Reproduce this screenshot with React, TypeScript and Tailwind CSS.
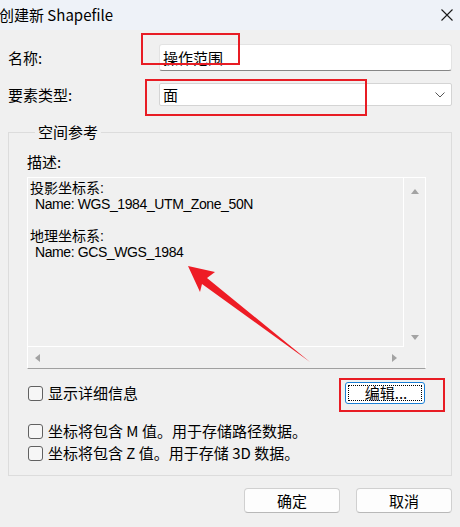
import React from 'react';

// Windows style "create shapefile" dialog, annotated with red marks
const Check = ({ label }: { label: React.ReactNode }) => (
  <label className="flex items-center h-[22px] gap-[5px]">
    <span className="w-[15px] h-[15px] rounded-[3px] border border-[#616161] bg-[#f6f6f6] shrink-0" />
    <span className="leading-[22px] whitespace-nowrap">{label}</span>
  </label>
);

const Tri = ({ dir }: { dir: 'up' | 'down' | 'left' | 'right' }) => {
  const pts = {
    up: '4,0 8,5 0,5',
    down: '0,0 8,0 4,5',
    left: '5,0 5,8 0,4',
    right: '0,0 5,4 0,8',
  }[dir];
  const vertical = dir === 'up' || dir === 'down';
  return (
    <svg width={vertical ? 8 : 5} height={vertical ? 5 : 8} viewBox={vertical ? '0 0 8 5' : '0 0 5 8'}>
      <polygon points={pts} fill="#a3a3a3" />
    </svg>
  );
};

export default function App() {
  return (
    <div className="relative w-[460px] h-[527px] overflow-hidden bg-[#f0f0f0] text-[15px] text-black font-['Noto_Sans_CJK_SC','Noto_Sans',sans-serif]">
      {/* Title bar */}
      <div className="h-[30px] bg-[#eef2f8] flex items-center justify-between pr-[7px]">
        <span className="leading-[30px] -ml-[1px]">创建新 Shapefile</span>
        <svg width="12" height="12" viewBox="0 0 12 12">
          <path d="M0.5 0.5 L11.5 11.5 M11.5 0.5 L0.5 11.5" stroke="#1a1a1a" strokeWidth="1.1" />
        </svg>
      </div>

      <div className="px-[8px]">
        {/* Name */}
        <div className="flex items-center mt-[14px] h-[27px]">
          <span className="w-[151px] leading-[27px]">名称:</span>
          <div className="flex-1 h-[27px] bg-white border border-[#e3e3e3] border-b-[#868686] rounded-[3px] flex items-center pl-[3px]">
            <span className="leading-[20px]">操作范围</span>
          </div>
        </div>

        {/* Feature type */}
        <div className="flex items-center mt-[12px] h-[23px]">
          <span className="w-[151px] leading-[23px]">要素类型:</span>
          <div className="flex-1 h-[23px] bg-white border border-[#d4d4d4] rounded-[2px] flex items-center justify-between pl-[3px] pr-[6px]">
            <span className="leading-[20px]">面</span>
            <svg width="10" height="6" viewBox="0 0 10 6">
              <path d="M0.5 0.5 L5 5 L9.5 0.5" stroke="#555" strokeWidth="1" fill="none" />
            </svg>
          </div>
        </div>

        {/* Spatial reference group */}
        <fieldset className="mt-[16px] border border-[#dcdcdc] pl-[18px] pr-[25px] pb-[11px]">
          <legend className="ml-[8px] px-[3px] leading-[20px]">空间参考</legend>
          <div className="mt-[10px] leading-[20px]">描述:</div>
          <div className="mt-[5px] h-[192px] border border-white border-b-[#a0a0a0] grid grid-cols-[1fr_21px] grid-rows-[1fr_21px]">
            <div className="border-r border-b border-white pl-[2px] pt-[2px] text-[14px] leading-[16px] font-['Liberation_Sans','Noto_Sans_CJK_SC',sans-serif]">
              <div className="h-[16px]">投影坐标系:</div>
              <div className="h-[16px] pl-[5px] tracking-[-0.4px]">Name: WGS_1984_UTM_Zone_50N</div>
              <div className="h-[16px]" />
              <div className="h-[16px]">地理坐标系:</div>
              <div className="h-[16px] pl-[5px] tracking-[-0.4px]">Name: GCS_WGS_1984</div>
            </div>
            <div className="flex flex-col items-center justify-between pt-[11px] pb-[7px]">
              <Tri dir="up" />
              <Tri dir="down" />
            </div>
            <div className="flex items-center justify-between pl-[7px] pr-[7px]">
              <Tri dir="left" />
              <Tri dir="right" />
            </div>
            <div />
          </div>

          <div className="mt-[13px] flex items-center justify-between pl-[1px] pr-[1px]">
            <Check label="显示详细信息" />
            <button className="relative w-[80px] h-[22px] bg-white border border-[#1a7fd6] rounded-[3px] flex items-center justify-center">
              <span className="absolute inset-[2px] border border-dotted border-black" />
              <span className="leading-[18px] pl-[2px]">编辑...</span>
            </button>
          </div>

          <div className="mt-[16px] pl-[1px]">
            <Check label="坐标将包含 M 值。用于存储路径数据。" />
            <Check label="坐标将包含 Z 值。用于存储 3D 数据。" />
          </div>
        </fieldset>

        {/* Dialog buttons */}
        <div className="mt-[12px] flex justify-end gap-[16px]">
          <button className="w-[96px] h-[25px] bg-[#fdfdfd] border border-[#d0d0d0] border-b-[#b8b8b8] rounded-[4px] leading-[23px]">确定</button>
          <button className="w-[96px] h-[25px] bg-[#fdfdfd] border border-[#d0d0d0] border-b-[#b8b8b8] rounded-[4px] leading-[23px]">取消</button>
        </div>
      </div>

      {/* Red annotations */}
      <div className="absolute left-[141px] top-[33px] w-[99px] h-[32px] border-2 border-[#e81c24]" />
      <div className="absolute left-[145px] top-[79px] w-[222px] h-[37px] border-2 border-[#e81c24]" />
      <div className="absolute left-[339px] top-[378px] w-[106px] h-[34px] border-2 border-[#e81c24]" />
      <svg className="absolute left-0 top-0" width="460" height="527" viewBox="0 0 460 527">
        <polygon
          points="188,266 215,272 207,278 310,362 202,284 200,292"
          fill="#ee1c25"
        />
      </svg>
    </div>
  );
}
